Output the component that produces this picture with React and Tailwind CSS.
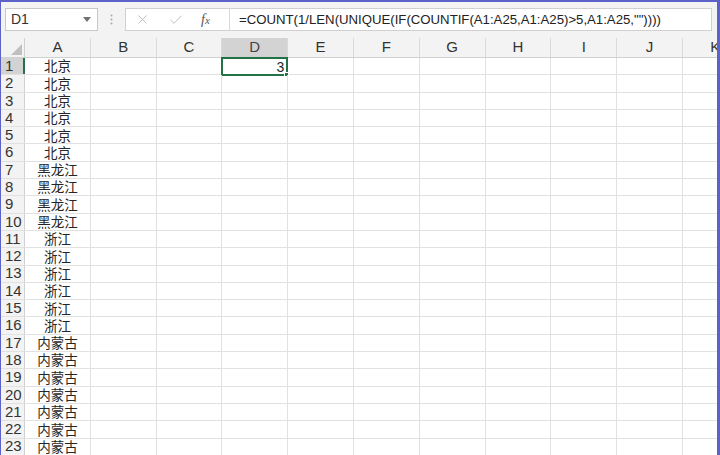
import { X, Check } from "lucide-react";

const cols = ["A", "B", "C", "D", "E", "F", "G", "H", "I", "J", "K"];

const data = [
  "北京", "北京", "北京", "北京", "北京", "北京",
  "黑龙江", "黑龙江", "黑龙江", "黑龙江",
  "浙江", "浙江", "浙江", "浙江", "浙江", "浙江",
  "内蒙古", "内蒙古", "内蒙古", "内蒙古", "内蒙古", "内蒙古", "内蒙古",
];

const font = { fontFamily: '"Liberation Sans", Arial, sans-serif' };

const App = () => {
  return (
    <div
      className="w-[720px] h-[455px] overflow-hidden bg-white border-t-2 border-l border-r-[3px] border-[#5c62c8] flex flex-col text-[#262626]"
      style={font}
    >
      {/* formula bar */}
      <div className="h-[36px] shrink-0 bg-[#f3f3f3] flex items-start pt-[6px] pl-[4px] pr-[5px]">
        <div className="w-[93px] h-[23px] bg-white border border-[#c8c8c8] flex items-center justify-between pl-[5px] pr-[6px]">
          <span className="text-[14px] text-[#333]">D1</span>
          <svg width="8" height="5" viewBox="0 0 8 5">
            <path d="M0 0 L8 0 L4 5 Z" fill="#707070" />
          </svg>
        </div>
        <div className="w-[27px] h-[23px] flex items-center justify-center">
          <svg width="3" height="11" viewBox="0 0 3 11">
            <circle cx="1.5" cy="1.5" r="1" fill="#a8a8a8" />
            <circle cx="1.5" cy="5.5" r="1" fill="#a8a8a8" />
            <circle cx="1.5" cy="9.5" r="1" fill="#a8a8a8" />
          </svg>
        </div>
        <div className="flex-1 h-[23px] bg-white border border-[#d0d0d0] flex items-center">
          <div className="w-[103px] flex items-center pl-[9px]">
            <X className="w-[15px] h-[15px] text-[#b8b8b8]" strokeWidth={1.4} />
            <Check className="w-[16px] h-[16px] text-[#b8b8b8] ml-[18px]" strokeWidth={1.4} />
            <span className="ml-[17px] text-[14px] italic text-[#555]" style={{ fontFamily: '"Liberation Serif", serif' }}>
              f<span className="text-[11px]">x</span>
            </span>
          </div>
          <div className="w-px h-[23px] bg-[#d8d8d8]" />
          <span className="pl-[9px] text-[13.2px] text-[#222] whitespace-nowrap">
            =COUNT(1/LEN(UNIQUE(IF(COUNTIF(A1:A25,A1:A25)&gt;5,A1:A25,""))))
          </span>
        </div>
      </div>

      {/* column headers */}
      <div className="h-[20px] shrink-0 flex bg-[#f3f3f3] border-b border-[#d0d0d0]">
        <div className="w-[24px] shrink-0 border-r border-[#d0d0d0] relative">
          <svg className="absolute right-[2px] bottom-[2px]" width="11" height="11" viewBox="0 0 11 11">
            <path d="M11 0 L11 11 L0 11 Z" fill="#c0c0c0" />
          </svg>
        </div>
        {cols.map((c) => (
          <div
            key={c}
            className={
              "w-[65.8px] shrink-0 border-r border-[#dadada] flex items-center justify-center text-[15px] " +
              (c === "D" ? "bg-[#d3d3d3] text-[#444]" : "text-[#333]")
            }
          >
            {c}
          </div>
        ))}
      </div>

      {/* rows */}
      <div className="flex flex-col">
        {data.map((v, i) => (
          <div key={i} className="h-[17.3px] shrink-0 flex border-b border-[#e1e1e1]">
            <div
              className={
                "w-[24px] shrink-0 flex items-center pl-[4px] text-[15px] text-[#333] " +
                (i === 0 ? "bg-[#d3d3d3] border-r-2 border-[#217346]" : "bg-[#f3f3f3] border-r border-[#d0d0d0]")
              }
            >
              {i + 1}
            </div>
            {cols.map((c) => (
              <div
                key={c}
                className="w-[65.8px] shrink-0 border-r border-[#e1e1e1] flex items-center justify-center text-[13.5px] leading-none relative"
                style={c === "A" ? { fontFamily: '"Noto Sans CJK SC", sans-serif' } : undefined}
              >
                {c === "A" && v}
                {c === "D" && i === 0 && (
                  <div className="absolute -left-[1px] -top-[1px] w-[67px] h-[19px] border-2 border-[#217346] flex items-center justify-end pr-[2px] text-[14px]" style={font}>
                    3
                    <div className="absolute -right-[3px] -bottom-[3px] w-[5px] h-[5px] bg-[#217346] border border-white" />
                  </div>
                )}
              </div>
            ))}
          </div>
        ))}
      </div>
    </div>
  );
};

export default App;
